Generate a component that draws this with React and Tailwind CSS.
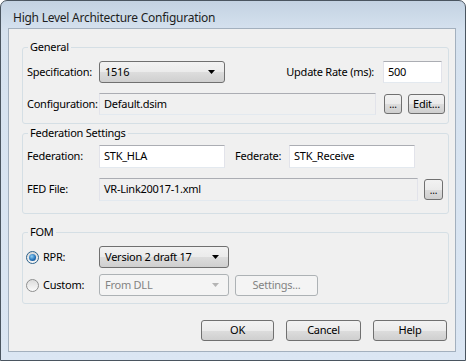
import React from 'react'

// Win7 style control surfaces
const btnFace = 'bg-[linear-gradient(#f2f2f2_0%,#ebebeb_50%,#dddddd_50%,#cfcfcf_100%)] border border-[#707070] rounded-[3px]'
const btnDisabled = 'bg-[#f4f4f4] border border-[#adb2b5] rounded-[3px] text-[#838383]'
const textBox = 'border border-[#abadb3] border-l-[#e2e3ea] border-r-[#e2e3ea] border-b-[#e3e9ef] px-[4px] flex items-center'

function Group({ title, className = '', children }) {
  return (
    <div className={`relative mx-[13px] w-[427px] border border-[#d5dfe5] rounded-[3px] ${className}`}>
      <span className="absolute left-[5px] -top-[9px] bg-[#f0f0f0] px-[2px] leading-[16px]">{title}</span>
      {children}
    </div>
  )
}

function Combo({ value, width, disabled }) {
  return (
    <div className={`${disabled ? btnDisabled : btnFace} ${width} h-[22px] flex items-center justify-between pl-[5px] pr-[9px]`}>
      <span>{value}</span>
      <svg width="7" height="4" viewBox="0 0 7 4">
        <path d="M0 0h7L3.5 4z" fill={disabled ? '#b4b4b4' : '#000'} />
      </svg>
    </div>
  )
}

function Radio({ checked }) {
  return (
    <div className={`w-[13px] h-[13px] rounded-full border flex items-center justify-center ${checked ? 'border-[#2c628b] bg-[linear-gradient(#d9d9d9,#f7f7f7)]' : 'border-[#8e8f8f] bg-[linear-gradient(#dcdcdc,#fbfbfb)]'}`}>
      {checked && <div className="w-[7px] h-[7px] rounded-full bg-[radial-gradient(circle_at_40%_35%,#8fd0f5,#1f6cb4_60%,#0d3f78)]" />}
    </div>
  )
}

export default function App() {
  return (
    <div className="w-[466px] h-[361px] border border-[#4a5560] rounded-t-[7px] bg-[linear-gradient(#c3d2e2,#d6e2ef_30px,#dbe6f3)] font-['Noto_Sans',sans-serif] text-[11px] tracking-[-0.25px] text-black overflow-hidden whitespace-nowrap">
      {/* Title bar */}
      <div className="h-[27px] pl-[12px] pt-[6px] flex items-center text-[12px] text-[#1e1e1e]">
        High Level Architecture Configuration
      </div>

      {/* Client area */}
      <div className="ml-[7px] w-[448px] h-[324px] border border-[#a3b0be] bg-[#f0f0f0] pt-[18px]">
        {/* General */}
        <Group title="General" className="h-[77px] pt-[13px]">
          <div className="flex items-center h-[22px]">
            <span className="w-[76px] pl-[4px]">Specification:</span>
            <Combo value="1516" width="w-[126px]" />
            <span className="w-[158px] text-right pr-[9px]">Update Rate (ms):</span>
            <div className={`${textBox} w-[59px] h-[22px] bg-white`}>500</div>
          </div>
          <div className="flex items-center h-[22px] mt-[10px]">
            <span className="w-[76px] pl-[4px]">Configuration:</span>
            <div className={`${textBox} w-[277px] h-[22px] bg-[#f0f0f0]`}>Default.dsim</div>
            <button className={`${btnFace} ml-[8px] w-[18px] h-[20px] leading-[14px] text-[10px]`}>...</button>
            <button className={`${btnFace} ml-[6px] w-[37px] h-[20px]`}>Edit...</button>
          </div>
        </Group>

        {/* Federation Settings */}
        <Group title="Federation Settings" className="h-[81px] mt-[9px] pt-[11px]">
          <div className="flex items-center h-[23px]">
            <span className="w-[76px] pl-[4px]">Federation:</span>
            <div className={`${textBox} w-[126px] h-[23px] bg-white`}>STK_HLA</div>
            <span className="w-[64px] pl-[10px]">Federate:</span>
            <div className={`${textBox} w-[126px] h-[23px] bg-white`}>STK_Receive</div>
          </div>
          <div className="flex items-center h-[23px] mt-[10px]">
            <span className="w-[76px] pl-[4px]">FED File:</span>
            <div className={`${textBox} w-[319px] h-[23px] bg-[#f0f0f0]`}>VR-Link20017-1.xml</div>
            <button className={`${btnFace} ml-[6px] w-[19px] h-[21px] leading-[14px] text-[10px]`}>...</button>
          </div>
        </Group>

        {/* FOM */}
        <Group title="FOM" className="h-[72px] mt-[18px] pt-[13px]">
          <div className="flex items-center h-[22px]">
            <div className="w-[76px] pl-[3px] flex items-center gap-[4px]">
              <Radio checked />
              <span>RPR:</span>
            </div>
            <Combo value="Version 2 draft 17" width="w-[130px]" />
          </div>
          <div className="flex items-center h-[22px] mt-[6px]">
            <div className="w-[76px] pl-[3px] flex items-center gap-[4px]">
              <Radio />
              <span>Custom:</span>
            </div>
            <Combo value="From DLL" width="w-[130px]" disabled />
            <button className={`${btnDisabled} ml-[6px] w-[83px] h-[21px]`}>Settings...</button>
          </div>
        </Group>

        {/* Dialog buttons */}
        <div className="flex justify-end gap-[12px] mt-[16px] pr-[8px]">
          <button className={`${btnFace} w-[73px] h-[21px]`}>OK</button>
          <button className={`${btnFace} w-[75px] h-[21px]`}>Cancel</button>
          <button className={`${btnFace} w-[74px] h-[21px]`}>Help</button>
        </div>
      </div>
    </div>
  )
}
